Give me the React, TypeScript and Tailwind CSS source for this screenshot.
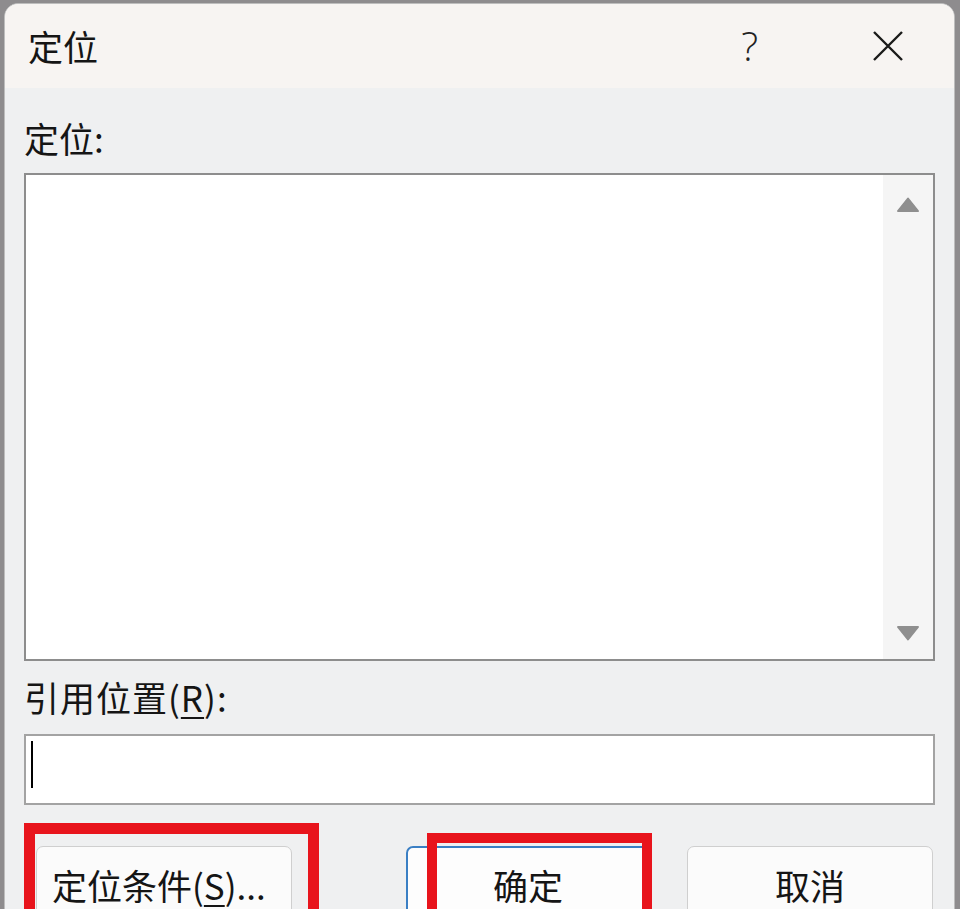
import React from 'react'

const font = { fontFamily: '"Noto Sans CJK SC", "Noto Sans", sans-serif' }

function Triangle({ down }: { down?: boolean }) {
  return (
    <svg width="24" height="16" viewBox="0 0 24 16" className={down ? 'rotate-180' : ''}>
      <path d="M12 1.5 L22 14 L2 14 Z" fill="#8f8f8f" stroke="#8f8f8f" strokeWidth="2" strokeLinejoin="round" />
    </svg>
  )
}

export default function App() {
  return (
    <div className="relative w-[960px] h-[909px] overflow-hidden bg-[#8e8c8e] pl-[4px] pt-[3px] pr-[5px]" style={font}>
      {/* dialog window */}
      <div className="h-[920px] rounded-t-[14px] border border-[#bdbdbd] bg-[#eff0f1] flex flex-col overflow-hidden text-[#151515]">
        {/* title bar */}
        <div className="h-[84px] shrink-0 bg-[#f7f4f2] flex items-center pl-[23px] pr-[50px]">
          <span className="text-[35px] leading-[40px]">定位</span>
          <span className="ml-auto text-[40px] leading-[40px] font-light text-[#222]" style={{ fontFamily: '"Open Sans", sans-serif' }}>?</span>
          <svg width="32" height="32" viewBox="0 0 32 32" className="ml-[114px]">
            <path d="M2 2 L30 30 M30 2 L2 30" stroke="#1a1a1a" strokeWidth="2.4" />
          </svg>
        </div>

        <div className="flex flex-col px-[19px]">
          <div className="mt-[30px] text-[35px] leading-[40px]">定位:</div>

          {/* list box */}
          <div className="mt-[15px] h-[488px] border-2 border-[#8d8d8d] bg-white flex">
            <div className="flex-1 bg-white" />
            <div className="w-[50px] bg-[#f5f5f5] flex flex-col items-center justify-between pt-[22px] pb-[18px]">
              <Triangle />
              <Triangle down />
            </div>
          </div>

          <div className="mt-[16px] text-[35px] leading-[40px] tracking-[1px]">
            引用位置(<span className="underline underline-offset-[5px] decoration-2">R</span>):
          </div>

          {/* reference input */}
          <div className="mt-[17px] h-[71px] border-2 border-[#a3a3a3] bg-white flex items-start pl-[5px] pt-[5px]">
            <div className="w-[2px] h-[47px] bg-black" />
          </div>

          {/* buttons */}
          <div className="mt-[41px] flex items-start">
            <div className="ml-[12px] w-[256px] h-[80px] rounded-[7px] border border-[#cfcfcf] bg-[#fbfbfb] flex justify-start pl-[15px] pt-[18px] text-[35px] leading-[40px]">
              定位条件(<span className="underline underline-offset-[5px] decoration-2">S</span>)...
            </div>
            <div className="ml-[114px] w-[244px] h-[80px] rounded-[7px] border-2 border-[#3a7fc4] bg-[#fdfdfd] flex justify-center pt-[17px] text-[35px] leading-[40px]">
              确定
            </div>
            <div className="ml-[37px] w-[246px] h-[80px] rounded-[7px] border border-[#cfcfcf] bg-[#fbfbfb] flex justify-center pt-[18px] text-[35px] leading-[40px]">
              取消
            </div>
          </div>
        </div>
      </div>

      {/* red highlight boxes */}
      <div className="absolute left-[24px] top-[823px] w-[295px] h-[120px] border-[11px] border-[#e8141c]" />
      <div className="absolute left-[427px] top-[833px] w-[225px] h-[110px] border-[10px] border-[#e8141c]" />
    </div>
  )
}
